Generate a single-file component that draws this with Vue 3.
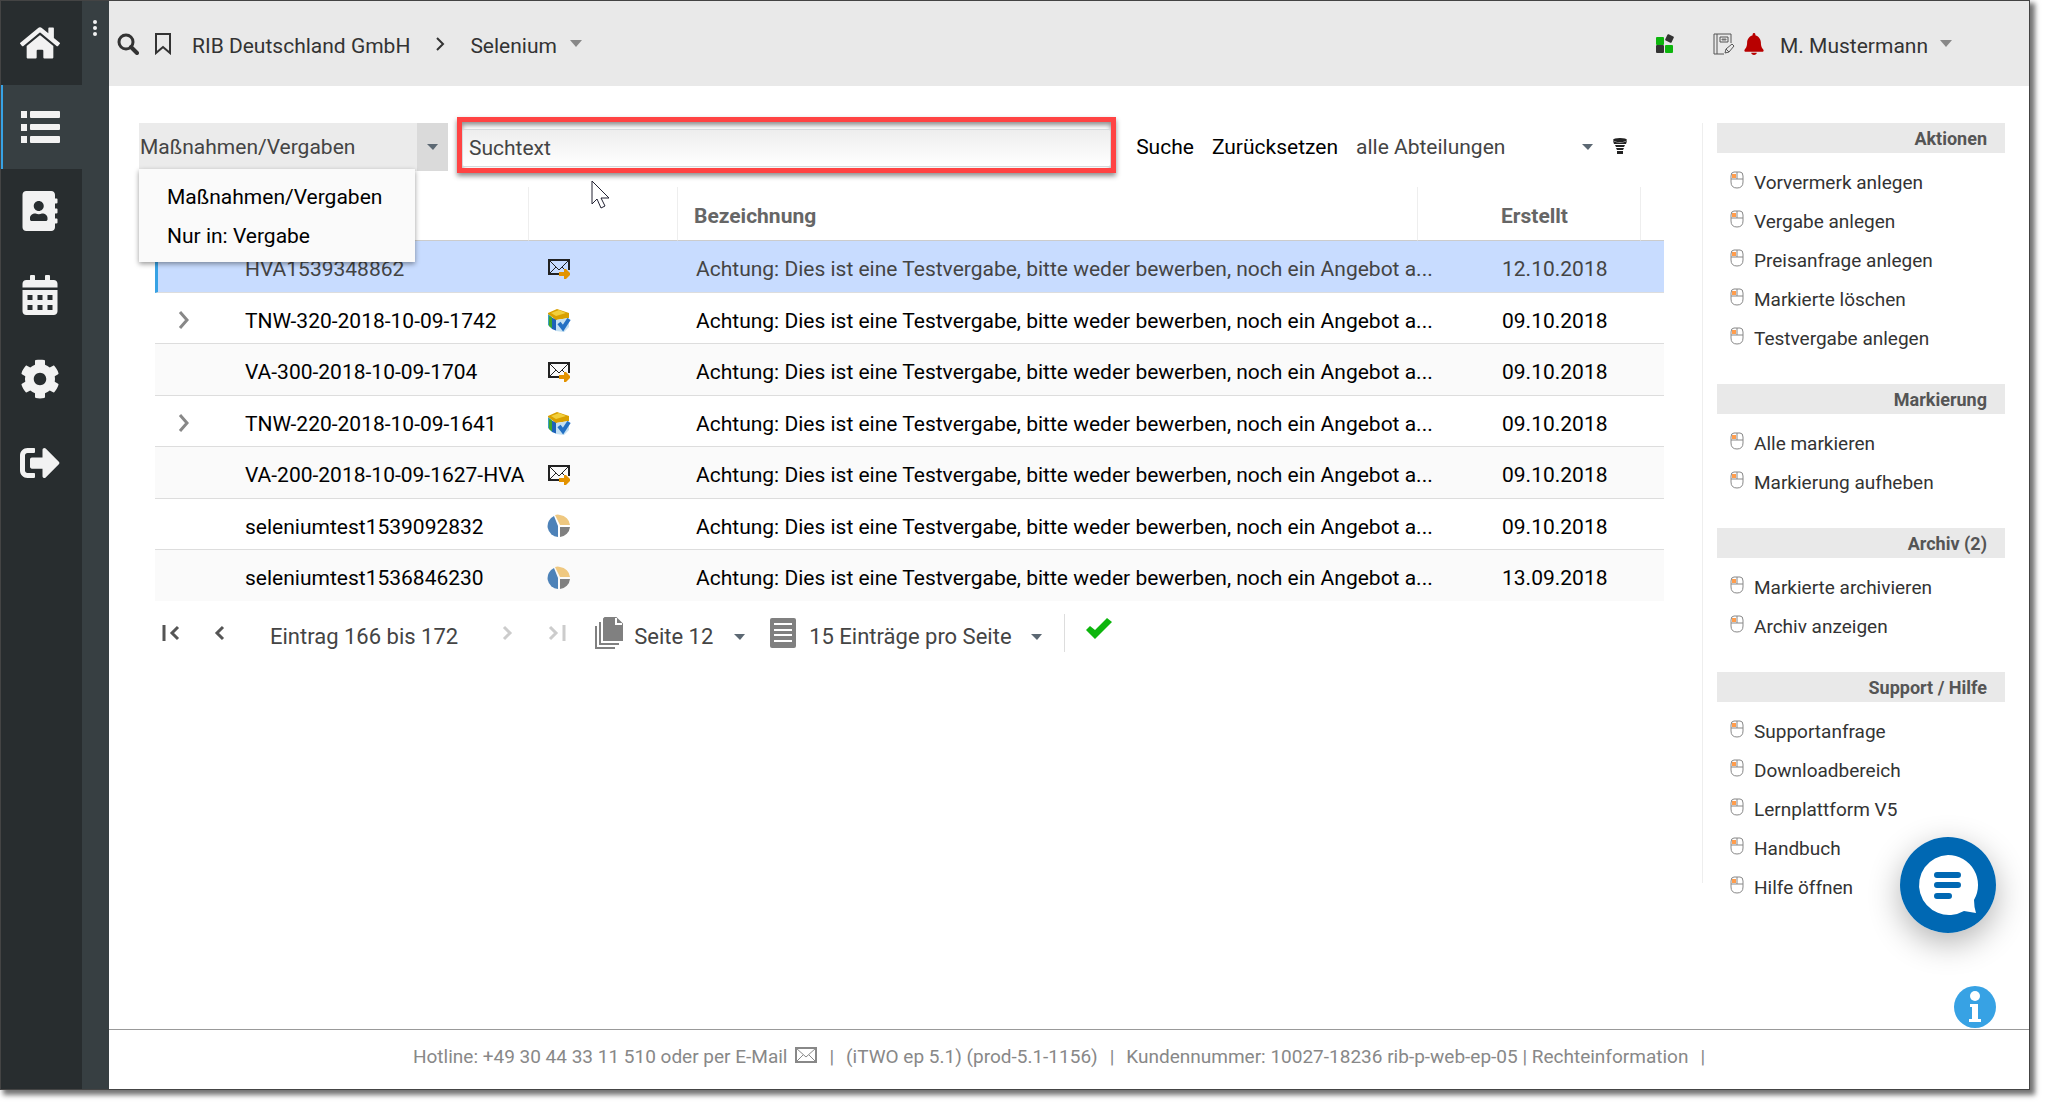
<script setup>
import { ref } from 'vue'

const searchText = ref('Suchtext')
const scope = ref('Maßnahmen/Vergaben')

const nav = [
  {
    label: 'Startseite',
    box: '0 0 576 512',
    path: 'M280.37 148.26L96 300.11V464a16 16 0 0 0 16 16l112.06-.29a16 16 0 0 0 15.92-16V368a16 16 0 0 1 16-16h64a16 16 0 0 1 16 16v95.64a16 16 0 0 0 16 16.05L464 480a16 16 0 0 0 16-16V300L295.67 148.26a12.19 12.19 0 0 0-15.3 0zM571.6 251.47L488 182.56V44.05a12 12 0 0 0-12-12h-56a12 12 0 0 0-12 12v72.61L318.47 43a48 48 0 0 0-61 0L4.34 251.47a12 12 0 0 0-1.6 16.9l25.5 31A12 12 0 0 0 45.15 301l235.22-193.74a12.19 12.19 0 0 1 15.3 0L530.9 301a12 12 0 0 0 16.9-1.6l25.5-31a12 12 0 0 0-1.7-16.93z'
  },
  {
    label: 'Listen',
    box: '0 0 40 40',
    active: true,
    path: 'M1 4h6v7h-6zM11 4h28q1 0 1 1v5q0 1-1 1h-28q-1 0-1-1v-5q0-1 1-1zM1 17h6v7h-6zM11 17h28q1 0 1 1v4q0 1-1 1h-28q-1 0-1-1v-4q0-1 1-1zM1 29h6v7h-6zM11 29h28q1 0 1 1v5q0 1-1 1h-28q-1 0-1-1v-5q0-1 1-1z'
  },
  {
    label: 'Adressbuch',
    box: '0 0 448 512',
    path: 'M436 160c6.6 0 12-5.4 12-12v-40c0-6.6-5.4-12-12-12h-20V48c0-26.5-21.5-48-48-48H48C21.5 0 0 21.5 0 48v416c0 26.5 21.5 48 48 48h320c26.5 0 48-21.5 48-48v-48h20c6.6 0 12-5.4 12-12v-40c0-6.6-5.4-12-12-12h-20v-64h20c6.6 0 12-5.4 12-12v-40c0-6.6-5.4-12-12-12h-20v-64h20zm-228-32c35.3 0 64 28.7 64 64s-28.7 64-64 64-64-28.7-64-64 28.7-64 64-64zm112 236.8c0 10.6-10 19.2-22.4 19.2H118.4C106 384 96 375.4 96 364.8v-19.2c0-31.8 30.1-57.6 67.2-57.6h5c12.3 5.1 25.7 8 39.8 8s27.6-2.9 39.8-8h5c37.1 0 67.2 25.8 67.2 57.6v19.2z'
  },
  {
    label: 'Kalender',
    box: '0 0 448 512',
    path: 'M0 464c0 26.500 21.500 48 48 48h352c26.500 0 48-21.500 48-48V192H0zM64 256h64v64H64zM192 256h64v64h-64zM320 256h64v64h-64zM64 384h64v64H64zM192 384h64v64h-64zM320 384h64v64h-64zM400 64h-48V12q0-12-12-12h-40q-12 0-12 12v52H160V12q0-12-12-12h-40q-12 0-12 12v52H48C21 64 0 85 0 112v48h448v-48c0-27-21-48-48-48z'
  },
  {
    label: 'Einstellungen',
    box: '0 0 512 512',
    path: 'M487.4 315.7l-42.6-24.6c4.3-23.2 4.3-47 0-70.2l42.6-24.6c4.9-2.8 7.1-8.6 5.5-14-11.1-35.6-30-67.800-54.700-94.600-3.800-4.100-10-5.100-14.800-2.300L380.800 110c-17.900-15.400-38.500-27.300-60.800-35.100V25.800c0-5.600-3.900-10.500-9.400-11.700-36.700-8.200-74.300-7.800-109.200 0-5.500 1.200-9.400 6.100-9.400 11.700V75c-22.200 7.900-42.800 19.800-60.800 35.100L88.700 85.500c-4.900-2.800-11-1.900-14.800 2.300-24.700 26.700-43.600 58.900-54.700 94.600-1.700 5.400.6 11.200 5.500 14L67.300 221c-4.300 23.200-4.300 47 0 70.200l-42.600 24.600c-4.900 2.800-7.100 8.600-5.500 14 11.100 35.600 30 67.800 54.700 94.600 3.800 4.100 10 5.100 14.800 2.300l42.600-24.600c17.900 15.400 38.500 27.300 60.800 35.100v49.200c0 5.600 3.900 10.500 9.400 11.700 36.700 8.200 74.300 7.800 109.200 0 5.500-1.200 9.400-6.100 9.400-11.700v-49.200c22.200-7.900 42.800-19.800 60.800-35.100l42.600 24.600c4.900 2.800 11 1.900 14.800-2.300 24.700-26.700 43.600-58.900 54.700-94.600 1.500-5.500-.7-11.300-5.600-14.100zM256 336c-44.100 0-80-35.900-80-80s35.900-80 80-80 80 35.900 80 80-35.900 80-80 80z'
  },
  {
    label: 'Abmelden',
    box: '0 0 512 512',
    path: 'M497 273L329 441c-15 15-41 4.500-41-17v-96H152c-13.300 0-24-10.700-24-24v-96c0-13.300 10.700-24 24-24h136V88c0-21.400 25.900-32 41-17l168 168c9.300 9.400 9.300 24.600 0 34zM192 436v-40c0-6.600-5.400-12-12-12H96c-17.700 0-32-14.300-32-32V160c0-17.700 14.300-32 32-32h84c6.600 0 12-5.400 12-12V76c0-6.600-5.400-12-12-12H96c-53 0-96 43-96 96v192c0 53 43 96 96 96h84c6.600 0 12-5.400 12-12z'
  }
]

const title = 'Achtung: Dies ist eine Testvergabe, bitte weder bewerben, noch ein Angebot a...'
const rows = [
  { code: 'HVA1539348862', icon: 'mail', date: '12.10.2018', selected: true },
  { code: 'TNW-320-2018-10-09-1742', icon: 'folder', date: '09.10.2018', parent: true },
  { code: 'VA-300-2018-10-09-1704', icon: 'mail', date: '09.10.2018' },
  { code: 'TNW-220-2018-10-09-1641', icon: 'folder', date: '09.10.2018', parent: true },
  { code: 'VA-200-2018-10-09-1627-HVA', icon: 'mail', date: '09.10.2018' },
  { code: 'seleniumtest1539092832', icon: 'pie', date: '09.10.2018' },
  { code: 'seleniumtest1536846230', icon: 'pie', date: '13.09.2018' }
]

const groups = [
  { title: 'Aktionen', items: ['Vorvermerk anlegen', 'Vergabe anlegen', 'Preisanfrage anlegen', 'Markierte löschen', 'Testvergabe anlegen'] },
  { title: 'Markierung', items: ['Alle markieren', 'Markierung aufheben'] },
  { title: 'Archiv (2)', items: ['Markierte archivieren', 'Archiv anzeigen'] },
  { title: 'Support / Hilfe', items: ['Supportanfrage', 'Downloadbereich', 'Lernplattform V5', 'Handbuch', 'Hilfe öffnen'] }
]
</script>

<template>
  <div class="window">
    <nav class="sidebar" aria-label="Hauptnavigation">
      <a v-for="n in nav" :key="n.label" href="#" class="nav-item" :class="{ active: n.active }" :aria-label="n.label">
        <svg width="40" height="40" :viewBox="n.box"><path :d="n.path" fill="#f2f2f2" fill-rule="evenodd" /></svg>
      </a>
    </nav>
    <div class="rail">
      <button class="plain" aria-label="Menü">
        <svg width="6" height="18" viewBox="0 0 6 18" fill="#f2f2f2"><circle cx="3" cy="3" r="2" /><circle cx="3" cy="9" r="2" /><circle cx="3" cy="15" r="2" /></svg>
      </button>
    </div>

    <div class="page">
      <header class="topbar">
        <button class="plain" aria-label="Suchen">
          <svg width="22" height="22" viewBox="0 0 22 22" fill="none" stroke="#333"><circle cx="9" cy="9" r="7" stroke-width="3" /><path d="M14 14l6 6" stroke-width="4" stroke-linecap="round" /></svg>
        </button>
        <button class="plain bookmark" aria-label="Lesezeichen">
          <svg width="18" height="22" viewBox="0 0 18 22" fill="none" stroke="#333" stroke-width="2"><path d="M2 1h14v19l-7-6-7 6z" /></svg>
        </button>
        <a href="#" class="crumb">RIB Deutschland GmbH</a>
        <svg class="sep" width="10" height="14" viewBox="0 0 10 14" fill="none" stroke="#333" stroke-width="2"><path d="M2 1l6 6-6 6" /></svg>
        <button class="plain crumb">Selenium
          <svg width="14" height="8" viewBox="0 0 14 8"><path d="M1 0h12l-6 7z" fill="#888" /></svg>
        </button>
        <div class="user">
          <button class="plain apps" aria-label="Anwendungen">
            <svg width="20" height="20" viewBox="0 0 20 20"><rect x="1" y="3" width="8" height="8" rx="1" fill="#0db50d" /><rect x="10" y="11" width="8" height="8" rx="1" fill="#0db50d" /><rect x="1" y="11" width="8" height="8" rx="1" fill="#333" /><rect x="11" y="1" width="7" height="7" rx="1" fill="#333" transform="rotate(25 14.500 4.500)" /></svg>
          </button>
          <button class="plain" aria-label="Notizen">
            <svg width="22" height="22" viewBox="0 0 22 22" fill="none" stroke="#555"><path d="M18 10V1H1v20h10M4 1v20M7 4h8v5H7z" /><path d="M9 6h4v1H9z" fill="#777" stroke="#777" /><path d="M12 20l1-4 6-5 2 2-5 6zM13 16l3 3" /></svg>
          </button>
          <button class="plain bell" aria-label="Benachrichtigungen">
            <svg width="20" height="22" viewBox="0 0 448 512" fill="#b80000"><path d="M224 512c35 0 64-22 64-52H160c0 30 29 52 64 52zm215-130c-19-20-55-52-55-164 0-78-55-140-128-166V32c0-18-14-32-32-32s-32 14-32 32v20C119 78 64 140 64 218c0 112-36 144-55 164-20 22-5 56 23 56h384c28 0 43-34 23-56z" /></svg>
          </button>
          <button class="plain crumb">M. Mustermann
            <svg width="14" height="8" viewBox="0 0 14 8"><path d="M1 0h12l-6 7z" fill="#888" /></svg>
          </button>
        </div>
      </header>

      <div class="body">
        <main class="content">
          <form class="toolbar" @submit.prevent>
            <div class="combo">
              <input v-model="scope" class="combo-text" aria-label="Suchbereich" readonly>
              <button type="button" class="combo-btn" aria-label="Auswahl öffnen">
                <svg width="12" height="7" viewBox="0 0 12 7"><path d="M0 0h11L6 6z" fill="#5c6873" /></svg>
              </button>
              <ul class="menu" role="listbox">
                <li role="option">Maßnahmen/Vergaben</li>
                <li role="option">Nur in: Vergabe</li>
              </ul>
            </div>
            <div class="highlight">
              <input v-model="searchText" class="search" aria-label="Suchtext">
              <svg class="pointer" width="20" height="30" viewBox="0 0 20 30"><path d="M1 1v23l5-5 4 9 4-2-4-8h8z" fill="#fff" stroke="#223" /></svg>
            </div>
            <button class="plain action">Suche</button>
            <button type="button" class="plain action">Zurücksetzen</button>
            <div class="drop departments">
              <select aria-label="Abteilung"><option>alle Abteilungen</option></select>
              <svg width="12" height="7" viewBox="0 0 12 7"><path d="M0 0h11L6 6z" fill="#5c6873" /></svg>
            </div>
            <button type="button" class="plain filter" aria-label="Filter">
              <svg width="16" height="16" viewBox="0 0 16 16" fill="#222"><ellipse cx="8" cy="2" rx="7" ry="2" /><path d="M1 3q7 3 14 0l-1 3H2zM3 7h10l-1 2H4zM4 10h8l-1 2H5zM5 13h6v3H5z" /></svg>
            </button>
          </form>

          <table class="grid">
            <colgroup><col class="c-exp"><col class="c-code"><col class="c-icon"><col><col class="c-date"><col class="c-end"></colgroup>
            <thead>
              <tr><th></th><th class="line"></th><th class="line"></th><th class="line name">Bezeichnung</th><th class="line date">Erstellt</th><th></th></tr>
            </thead>
            <tbody>
              <tr v-for="r in rows" :key="r.code" :class="{ selected: r.selected }">
                <td class="exp">
                  <button v-if="r.parent" class="plain" aria-label="Aufklappen">
                    <svg width="12" height="20" viewBox="0 0 12 20" fill="none" stroke="#888" stroke-width="3"><path d="M2 2l7 8-7 8" /></svg>
                  </button>
                </td>
                <td>{{ r.code }}</td>
                <td class="icon">
                  <svg v-if="r.icon === 'mail'" width="24" height="22" viewBox="0 0 24 22" fill="none"><path d="M22 12V2H2v14h10" stroke="#222" stroke-width="2" /><path d="M2 2l10 10L22 2M2 16l7-7M18 12l-3-3" stroke="#222" /><path d="M12 14h5v-3h2l4 4v2l-4 4h-2v-3h-5z" fill="#e39300" /></svg>
                  <svg v-else-if="r.icon === 'folder'" width="24" height="24" viewBox="0 0 24 24"><path d="M1 6l4 3v12l-4-4z" fill="#3a9fc0" /><path d="M2 8l4 2v11l-4-3z" fill="#3fa52c" /><path d="M5 10l5 1v12l-5-2z" fill="#1d63b8" /><path d="M1 5l9-4 12 4v5l-13 2-8-6z" fill="#d9a000" /><path d="M4 5l8-3 7 3-10 3z" fill="#f2cf3c" /><path d="M9 12l13-2v9l-5 5-8-1z" fill="#c4e0f2" /><path d="M12 15l4 5 6-9" fill="none" stroke="#2471c4" stroke-width="4" /></svg>
                  <svg v-else width="24" height="24" viewBox="0 0 24 24"><path d="M11 12v11A11 11 0 0 1 7 2z" fill="#4d82b8" /><path d="M13 11L8 1q3-1 5 0a11 11 0 0 1 10 10z" fill="#efc880" /><path d="M13 13h10a11 11 0 0 1-10 10z" fill="#808080" /></svg>
                </td>
                <td class="name">{{ title }}</td>
                <td class="date">{{ r.date }}</td>
                <td></td>
              </tr>
            </tbody>
          </table>

          <div class="pager">
            <button class="plain first" aria-label="Erste Seite"><svg width="18" height="16" viewBox="0 0 18 16" fill="none" stroke="#555" stroke-width="3"><path d="M2 0v16M16 2l-6 6 6 6" /></svg></button>
            <button class="plain prev" aria-label="Vorherige Seite"><svg width="12" height="16" viewBox="0 0 12 16" fill="none" stroke="#555" stroke-width="3"><path d="M10 2L4 8l6 6" /></svg></button>
            <span class="range">Eintrag 166 bis 172</span>
            <button class="plain next" aria-label="Nächste Seite" disabled><svg width="12" height="16" viewBox="0 0 12 16" fill="none" stroke="#ccc" stroke-width="3"><path d="M2 2l6 6-6 6" /></svg></button>
            <button class="plain last" aria-label="Letzte Seite" disabled><svg width="18" height="16" viewBox="0 0 18 16" fill="none" stroke="#ccc" stroke-width="3"><path d="M2 2l6 6-6 6M16 0v16" /></svg></button>
            <svg width="28" height="32" viewBox="0 0 28 32" fill="none" stroke="#808080" stroke-width="2"><path d="M10 1h11l6 6v16H9V2z" fill="#808080" /><path d="M21 1v6h6" stroke="#fff" /><path d="M5 5v22h19M1 9v22h19" /></svg>
            <div class="drop pages">
              <select aria-label="Seite"><option>Seite 12</option></select>
              <svg width="12" height="7" viewBox="0 0 12 7"><path d="M0 0h11L6 6z" fill="#5c6873" /></svg>
            </div>
            <svg width="28" height="32" viewBox="0 0 28 32"><rect x="1" y="1" width="26" height="30" rx="2" fill="#808080" /><path d="M5 7h18M5 13h18M5 18h18M5 24h18" stroke="#fff" stroke-width="2" /></svg>
            <div class="drop sizes">
              <select aria-label="Einträge pro Seite"><option>15 Einträge pro Seite</option></select>
              <svg width="12" height="7" viewBox="0 0 12 7"><path d="M0 0h11L6 6z" fill="#5c6873" /></svg>
            </div>
            <button class="plain confirm" aria-label="Übernehmen"><svg width="26" height="22" viewBox="0 0 26 22"><path d="M0 12l4-4 5 4L21 0l5 4L9 21z" fill="#0db50d" /></svg></button>
          </div>
        </main>

        <aside class="side">
          <section v-for="g in groups" :key="g.title">
            <h2>{{ g.title }}</h2>
            <ul>
              <li v-for="i in g.items" :key="i">
                <svg width="14" height="18" viewBox="0 0 14 18" fill="none" stroke="#888"><path d="M2 3h4v4H2z" fill="#ff9d4d" stroke="none" /><path d="M4 1h6q3 0 3 4v6q0 6-6 6t-6-6V5q0-4 3-4zM1 8h12M7 1v7" /></svg>
                <a href="#">{{ i }}</a>
              </li>
            </ul>
          </section>
        </aside>
      </div>

      <footer class="footer">
        <span>Hotline: +49 30 44 33 11 510 oder per E-Mail</span>
        <a href="#" class="mail" aria-label="E-Mail"><svg width="22" height="16" viewBox="0 0 22 16" fill="none" stroke="#888"><rect x="1" y="1" width="20" height="14" stroke-width="2" /><path d="M1 1l10 9L21 1M1 15l7-7M21 15l-7-7" /></svg></a>
        <span class="bar">|</span>
        <span>(iTWO ep 5.1) (prod-5.1-1156)</span>
        <span class="bar">|</span>
        <span>Kundennummer: 10027-18236 rib-p-web-ep-05 | <a href="#">Rechteinformation</a></span>
        <span class="bar">|</span>
      </footer>
    </div>

    <button class="plain chat" aria-label="Chat öffnen">
      <svg width="96" height="96" viewBox="0 0 96 96"><circle cx="48" cy="48" r="48" fill="#0068b3" /><path d="M48 18a30 30 0 1 0 16 56q6 1 12 2-2-6-2-13A30 30 0 0 0 48 18z" fill="#fff" /><path d="M37 38h21M37 48h21M37 59h12" stroke="#0068b3" stroke-width="6" stroke-linecap="round" /></svg>
    </button>
    <button class="plain info" aria-label="Information">
      <svg width="42" height="42" viewBox="0 0 42 42"><circle cx="21" cy="21" r="21" fill="#37a2e4" /><circle cx="21" cy="10" r="5" fill="#fff" /><path d="M16 18h8v15h3v3H15v-3h3V21h-2z" fill="#fff" /></svg>
    </button>
  </div>
</template>

<style>
body {
  margin: 0;
  background: #fff;
}
</style>

<style scoped>
* {
  box-sizing: border-box;
}
.window {
  position: relative;
  display: flex;
  min-height: calc(100vh - 15px);
  margin: 0 15px 15px 0;
  border: 1px solid #444;
  background: #fff;
  box-shadow: 4px 4px 5px 1px rgba(0, 0, 0, 0.55);
  color: #444;
  font: 21px/28px Roboto, sans-serif;
}
svg {
  display: block;
  flex: none;
}
a {
  color: inherit;
  text-decoration: none;
}
ul {
  margin: 0;
  padding: 0;
  list-style: none;
}
input,
select,
button {
  margin: 0;
  padding: 0;
  border: 0;
  border-radius: 0;
  background: none;
  color: inherit;
  font: inherit;
  appearance: none;
}
.plain {
  display: flex;
  align-items: center;
}
.sidebar {
  width: 81px;
  background: #282d2f;
}
.nav-item {
  display: flex;
  height: 84px;
  align-items: center;
  justify-content: center;
  padding-right: 3px;
}
.nav-item.active {
  padding-right: 5px;
  border-left: 2px solid #37a2e4;
  background: #373f42;
}
.rail {
  width: 27px;
  padding: 18px 0 0 10px;
  background: #373f42;
}
.page {
  display: flex;
  flex: 1;
  flex-direction: column;
  min-width: 0;
}
.topbar {
  display: flex;
  align-items: center;
  height: 85px;
  padding: 4px 76px 0 8px;
  background: #e9e9e9;
  color: #333;
}
.topbar svg {
  margin-bottom: 3px;
}
.bookmark {
  margin: 0 20px 0 15px;
}
.sep {
  margin: 0 25px;
}
.crumb {
  gap: 12px;
}
.user {
  display: flex;
  align-items: center;
  margin-left: auto;
}
.user .crumb {
  gap: 11px;
}
.apps {
  margin-right: 38px;
}
.bell {
  margin: 0 16px 0 9px;
}
.body {
  display: flex;
  flex: 1;
  padding: 37px 24px 0 30px;
}
.content {
  flex: 1;
  min-width: 0;
}
.toolbar {
  display: flex;
  align-items: center;
  height: 48px;
  padding-right: 74px;
}
.combo {
  position: relative;
  display: flex;
  width: 309px;
  height: 48px;
}
.combo-text {
  flex: 1;
  min-width: 0;
  padding-left: 1px;
  background: #ebebeb;
}
.combo-btn {
  display: flex;
  align-items: center;
  justify-content: center;
  width: 31px;
  background: #dadada;
}
.menu {
  position: absolute;
  z-index: 2;
  top: 46px;
  left: 0;
  width: 276px;
  padding: 9px 0 6px;
  background: #fafafa;
  box-shadow: 0 2px 5px rgba(0, 0, 0, 0.4);
  color: #000;
}
.menu li {
  padding-left: 28px;
  line-height: 39px;
}
.highlight {
  position: relative;
  display: flex;
  flex: 1;
  height: 56px;
  margin: 0 20px 4px 9px;
  padding: 7px 0 1px;
  border: 5px solid #ff4343;
  box-shadow: 0 3px 5px rgba(0, 0, 0, 0.45), inset 0 3px 5px rgba(0, 0, 0, 0.45);
}
.search {
  flex: 1;
  min-width: 0;
  padding-left: 6px;
  border: 1px solid #d5d9dc;
  border-radius: 2px;
  background: linear-gradient(#ededed, #fff);
}
.pointer {
  position: absolute;
  z-index: 2;
  top: 58px;
  left: 129px;
}
.action {
  margin-right: 18px;
  color: #000;
}
.drop {
  display: flex;
  align-items: center;
}
.drop select {
  width: 100%;
  height: 40px;
}
.drop svg {
  margin-left: -12px;
  pointer-events: none;
}
.departments {
  width: 238px;
  margin-right: 18px;
}
.filter {
  padding-bottom: 2px;
}
.grid {
  width: calc(100% - 54px);
  margin: 16px 0 0 16px;
  border-spacing: 0;
  table-layout: fixed;
}
.c-exp {
  width: 90px;
}
.c-code {
  width: 284px;
}
.c-icon {
  width: 149px;
}
.c-date {
  width: 223px;
}
.c-end {
  width: 23px;
}
th {
  height: 54px;
  padding: 4px 0 0;
  border-bottom: 1px solid #ccc;
  color: #666;
  font-weight: bold;
  text-align: left;
}
.line {
  border-right: 1px solid #eee;
}
th.name {
  padding-left: 16px;
}
th.date {
  padding-left: 83px;
}
td {
  height: 51px;
  padding: 5px 0 0;
  border-bottom: 1px solid #ddd;
  white-space: nowrap;
}
tbody tr {
  color: #000;
}
tbody tr:nth-child(odd) {
  background: #fafafa;
}
tbody tr:nth-child(odd) td {
  height: 52px;
}
tbody tr:last-child td {
  height: 51px;
  border-bottom: 0;
}
tbody tr.selected {
  background: #c8dcff;
  color: #444;
}
.selected .exp {
  border-left: 3px solid #37a2e4;
}
.exp {
  padding: 4px 0 0 23px;
}
.icon {
  padding: 4px 0 0 18px;
}
td.name {
  padding-left: 18px;
}
td.date {
  padding-left: 84px;
}
.pager {
  display: flex;
  align-items: center;
  height: 64px;
  padding: 0 0 0 23px;
  font-size: 22px;
}
.prev {
  margin-left: 33px;
}
.range {
  margin: 8px 44px 0 45px;
}
.next {
  margin-right: 34px;
}
.last {
  margin-right: 29px;
}
.pager .drop {
  margin-top: 8px;
}
.pages {
  width: 112px;
  margin: 0 23px 0 11px;
}
.sizes {
  width: 234px;
  margin: 0 21px 0 12px;
}
.confirm {
  height: 38px;
  padding: 0 0 8px 21px;
  border-left: 1px solid #ddd;
}
.side {
  width: 303px;
  padding-left: 15px;
  background: linear-gradient(#eee, #eee) no-repeat 0 0 / 1px 760px;
  color: #333;
  font-size: 19px;
}
.side section {
  margin-bottom: 26px;
}
.side h2 {
  margin: 0 0 10px;
  padding: 1px 18px 0 0;
  background: #e9e9e9;
  color: #555;
  font-size: 18px;
  line-height: 29px;
  text-align: right;
}
.side li {
  display: flex;
  gap: 10px;
  align-items: center;
  height: 39px;
  padding-left: 13px;
}
.side li svg {
  margin-bottom: 6px;
}
.footer {
  display: flex;
  align-items: center;
  justify-content: center;
  height: 60px;
  padding: 0 8px 6px 0;
  border-top: 1px solid #999;
  color: #888;
  font-size: 19px;
}
.mail {
  margin: 0 0 4px 8px;
}
.bar {
  margin: 0 12px;
}
.chat {
  position: absolute;
  right: 33px;
  bottom: 156px;
  border-radius: 50%;
  box-shadow: 0 10px 32px rgba(0, 0, 0, 0.3);
}
.info {
  position: absolute;
  right: 33px;
  bottom: 61px;
}
</style>
